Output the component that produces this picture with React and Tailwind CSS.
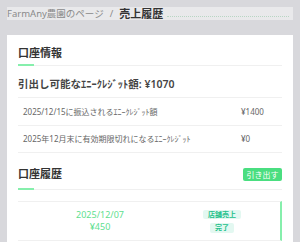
export default function App() {
  const font = { fontFamily: '"Noto Sans", "Noto Sans CJK JP", sans-serif' };
  return (
    <div className="w-[300px] h-[242px] overflow-hidden bg-[#d8d8dc] pt-[7px]" style={font}>
      {/* breadcrumb */}
      <div className="ml-[7px] w-[286px] h-[13px] bg-[#e9e9eb] flex items-center">
        <span className="text-[9.5px] text-[#8a8a8a] leading-none">FarmAny農園のページ</span>
        <span className="text-[9.5px] text-[#8a8a8a] leading-none mx-[6px]">/</span>
        <span className="text-[11px] font-bold text-[#333] leading-none">売上履歴</span>
        <div className="flex-1 self-end mb-[3px] mx-[4px] border-b border-dotted border-[#b9d6c4]" />
      </div>

      {/* card */}
      <div className="mt-[15px] ml-[7px] w-[286px] h-[300px] bg-white px-[11px] pt-[11px]">
        <div className="relative border-b border-[#f0f0f0] pb-[5px]">
          <h2 className="text-[11px] leading-[14px] font-bold text-[#333]">口座情報</h2>
          <div className="absolute left-0 -bottom-px w-[16px] h-[2px] bg-[#86efac]" />
        </div>

        <div className="border-b border-[#f0f0f0] pt-[11px] pb-[6px]">
          <p className="text-[10.5px] leading-[14px] font-semibold text-[#444]">
            引出し可能なｴﾆｰｸﾚｼﾞｯﾄ額: ¥1070
          </p>
        </div>

        <div className="h-[28px] flex items-center border-b border-[#f0f0f0] pl-[5px] text-[8px] text-[#666]">
          <span className="flex-1">2025/12/15に振込されるｴﾆｰｸﾚｼﾞｯﾄ額</span>
          <span className="w-[41px]">¥1400</span>
        </div>
        <div className="h-[27px] flex items-center border-b border-[#f0f0f0] pl-[5px] text-[8px] text-[#666]">
          <span className="flex-1">2025年12月末に有効期限切れになるｴﾆｰｸﾚｼﾞｯﾄ</span>
          <span className="w-[41px]">¥0</span>
        </div>

        <div className="relative flex items-center justify-between border-b border-[#f0f0f0] pt-[14px] pb-[8px]">
          <h2 className="text-[11px] leading-[14px] font-bold text-[#333]">口座履歴</h2>
          <button className="w-[39px] h-[13px] mb-[-1px] rounded-[2px] bg-[#4ade80] text-white text-[8px] leading-none flex items-center justify-center">
            引き出す
          </button>
          <div className="absolute left-0 -bottom-px w-[16px] h-[2px] bg-[#86efac]" />
        </div>

        <div className="mt-[11px] h-[40px] flex items-center border-t border-b border-[#f0f0f0] border-r-2 border-r-[#86efac]">
          <div className="w-[164px] flex flex-col items-center text-[9px] leading-[12px] text-[#5ee08f]">
            <span>2025/12/07</span>
            <span>¥450</span>
          </div>
          <div className="w-[80px] flex flex-col items-center gap-[4px]">
            <span className="px-[5px] h-[9px] flex items-center rounded-[2px] bg-[#e3f8f1] text-[#22c08a] text-[7px] font-bold leading-none">
              店舗売上
            </span>
            <span className="px-[5px] h-[10px] flex items-center rounded-[2px] bg-[#e3f8f1] text-[#22c08a] text-[7px] font-bold leading-none">
              完了
            </span>
          </div>
        </div>
      </div>
    </div>
  );
}
